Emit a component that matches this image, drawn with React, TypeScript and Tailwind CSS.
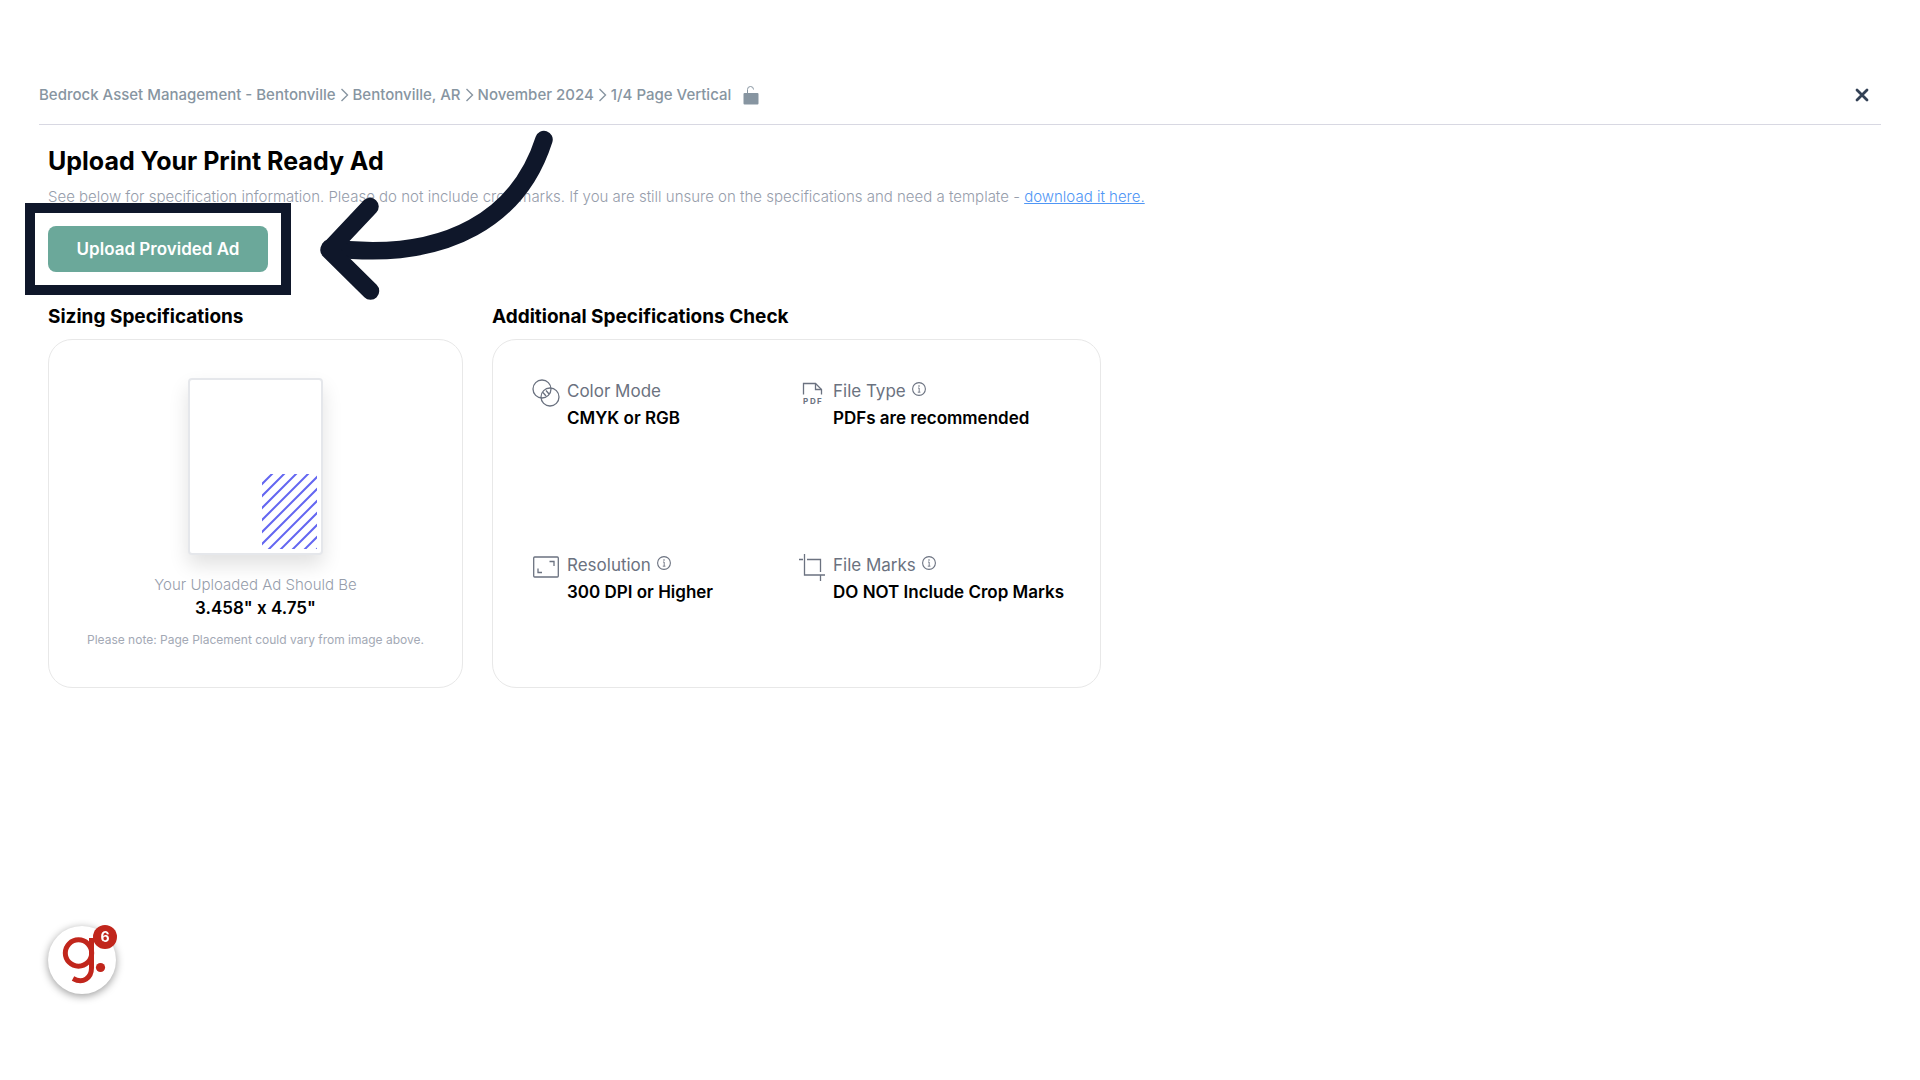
import type { ReactNode } from "react"

const crumbs = [
    "Bedrock Asset Management - Bentonville",
    "Bentonville, AR",
    "November 2024",
    "1/4 Page Vertical",
]

const ChevronIcon = () => (
    <svg viewBox="0 0 9 14" className="w-[9px] h-[14px] mx-1" fill="none" stroke="currentColor" strokeWidth="1.4">
        <path d="M1.5 1L7.5 7L1.5 13" />
    </svg>
)

const UnlockIcon = () => (
    <svg viewBox="0 0 16 20" className="w-4 h-5 ml-3" fill="none">
        <rect x="0.5" y="8" width="15" height="11.5" rx="1" fill="currentColor" />
        <path d="M4.5 8V4.5A3 3 0 0 1 10.5 4.5" stroke="currentColor" strokeWidth="1" />
    </svg>
)

const CloseIcon = () => (
    <svg viewBox="0 0 14 14" className="size-[14px]" stroke="#334155" strokeWidth="2.8" strokeLinecap="round">
        <path d="M2 2L12 12M12 2L2 12" />
    </svg>
)

const InfoIcon = () => (
    <svg viewBox="0 0 14 14" className="size-[14px]" fill="none" stroke="currentColor" strokeWidth="1.1">
        <circle cx="7" cy="7" r="6.4" />
        <path d="M6 6H7.2V10M5.8 10.2H8.4" strokeWidth="0.9" />
        <circle cx="7" cy="4" r="0.8" fill="currentColor" stroke="none" />
    </svg>
)

const ColorIcon = () => (
    <svg viewBox="0 0 28 28" className="size-7" fill="none" stroke="currentColor" strokeWidth="1.3">
        <circle cx="10" cy="10" r="9" />
        <circle cx="18" cy="18" r="9" />
        <path d="M11 13.5L14 17M14 11.5L17 15" />
    </svg>
)

const PdfIcon = () => (
    <svg viewBox="0 0 28 28" className="size-7" fill="none" stroke="currentColor" strokeWidth="1.3">
        <path d="M5.5 15.5V4.5H17.5L23.5 10.5V15.5" />
        <path d="M17.5 4.5V10.5H23.5" />
        <text x="5 12 19" y="25" fill="currentColor" stroke="none" className="text-[8px] font-bold">
            PDF
        </text>
    </svg>
)

const ResolutionIcon = () => (
    <svg viewBox="0 0 28 28" className="size-7" fill="none" stroke="currentColor" strokeWidth="1.3">
        <rect x="1.7" y="4" width="24.6" height="20" rx="1" />
        <path d="M6 15.5V19.5H10M17.5 8.5H22V13" />
    </svg>
)

const CropIcon = () => (
    <svg viewBox="0 0 28 28" className="size-7" fill="none" stroke="currentColor" strokeWidth="1.3">
        <path d="M6.5 1V22H27M1 6.5H5M9 6.5H22.5V19M22.5 22V28" />
    </svg>
)

interface SpecProps {
    icon: ReactNode
    label: string
    value: string
    info?: boolean
}

const Spec = ({ icon, label, value, info }: SpecProps) => {
    return (
        <div className="flex items-start gap-[7px] text-[#6b7280]">
            <div className="pt-px">{icon}</div>
            <div className="text-[17px] leading-[27px] whitespace-nowrap">
                <div className="flex items-center gap-1.5">
                    <span>{label}</span>
                    {info && (
                        <button type="button" aria-label={`About ${label}`} className="pb-1.5">
                            <InfoIcon />
                        </button>
                    )}
                </div>
                <p className="font-semibold text-black">{value}</p>
            </div>
        </div>
    )
}

const PagePreview = () => (
    <div className="flex items-end justify-end w-[135px] h-[177px] p-1 bg-white border-2 border-gray-200 rounded-[4px] shadow-[0_10px_20px_rgba(0,0,0,0.12)]">
        <svg viewBox="0 0 55 75" className="w-[55px] h-[75px]" stroke="#6366f1" strokeWidth="2">
            <path d="M-2 12L12 -2M-2 24L24 -2M-2 36L36 -2M-2 48L48 -2M-2 60L60 -2M-2 72L58 12M4 78L58 24M16 78L58 36M28 78L58 48M40 78L58 60M52 78L58 72" />
        </svg>
    </div>
)

const Launcher = () => (
    <button
        type="button"
        aria-label="Open chat, 6 unread"
        className="fixed left-12 bottom-[86px] size-[68px] rounded-full bg-white shadow-[0_2px_8px_rgba(0,0,0,0.4)]"
    >
        <svg viewBox="0 0 68 68" className="size-[68px]" fill="none" stroke="#c1261c" strokeWidth="5">
            <circle cx="30.5" cy="27" r="13.2" />
            <path d="M43.5 12V42C43.5 52 35 58 25 52.5" />
            <circle cx="52.5" cy="41.5" r="4.6" fill="#c1261c" stroke="none" />
        </svg>
        <span className="absolute -top-px -right-px size-6 rounded-full bg-[#c1261c] text-white text-sm leading-6 font-bold">
            6
        </span>
    </button>
)

const App = () => {
    return (
        <div className="min-h-screen bg-white font-['Inter',sans-serif] text-black px-[39px] pt-[66px]">
            <header className="flex items-center justify-between h-[59px] border-b border-[#d8d8e2] pr-3">
                <nav className="flex items-center text-[15px] leading-5 font-medium text-[#8795a1]">
                    {crumbs.map((crumb, i) => (
                        <div key={crumb} className="flex items-center">
                            {i > 0 && <ChevronIcon />}
                            <a href="#">{crumb}</a>
                        </div>
                    ))}
                    <UnlockIcon />
                </nav>
                <button type="button" aria-label="Close">
                    <CloseIcon />
                </button>
            </header>

            <main className="px-[9px] pt-5">
                <h1 className="text-[25px] leading-8 font-bold">Upload Your Print Ready Ad</h1>
                <p className="mt-2 text-[15px] leading-6 font-light text-[#969dab]">
                    See below for specification information. Please do not include crop marks. If you are still unsure on
                    the specifications and need a template -{" "}
                    <a href="#" className="text-[#4f96f5] underline">
                        download it here.
                    </a>
                </p>

                <div className="relative w-[220px] mt-[17px]">
                    <button type="button" className="w-full h-[46px] pt-0.5 rounded-lg bg-[#6ba89a] text-white text-[17px] font-semibold">
                        Upload Provided Ad
                    </button>
                    <div className="absolute -inset-[23px] border-[10px] border-[#0f172a] pointer-events-none" />
                    <svg
                        viewBox="310 125 250 180"
                        className="absolute left-[262px] -top-[101px] w-[250px] h-[180px] max-w-none pointer-events-none"
                        fill="none"
                        stroke="#0f172a"
                        strokeWidth="17.5"
                        strokeLinecap="round"
                        strokeLinejoin="round"
                    >
                        <path d="M544 139.5C520 215 450 263 330 248" />
                        <path d="M370 206.5L329 250L370.5 291" />
                    </svg>
                </div>

                <div className="flex items-stretch gap-[29px] mt-[31px]">
                    <section className="flex flex-col w-[415px]">
                        <h2 className="text-[19px] leading-7 font-bold">Sizing Specifications</h2>
                        <div className="flex flex-col items-center h-[349px] mt-2 pt-[38px] border border-[#e8e8e8] rounded-3xl">
                            <PagePreview />
                            <p className="mt-[18px] text-[15px] leading-6 font-light text-[#969dab]">Your Uploaded Ad Should Be</p>
                            <p className="text-[17px] leading-[22px] font-semibold">3.458&quot; x 4.75&quot;</p>
                            <p className="mt-[11px] text-xs leading-5 text-[#a3a9b5]">
                                Please note: Page Placement could vary from image above.
                            </p>
                        </div>
                    </section>

                    <section className="flex flex-col w-[609px]">
                        <h2 className="text-[19px] leading-7 font-bold">Additional Specifications Check</h2>
                        <div className="grid grid-cols-[266px_1fr] grid-rows-[174px_1fr] h-[349px] mt-2 pt-[38px] pl-[39px] border border-[#e8e8e8] rounded-3xl">
                            <Spec icon={<ColorIcon />} label="Color Mode" value="CMYK or RGB" />
                            <Spec icon={<PdfIcon />} label="File Type" value="PDFs are recommended" info />
                            <Spec icon={<ResolutionIcon />} label="Resolution" value="300 DPI or Higher" info />
                            <Spec icon={<CropIcon />} label="File Marks" value="DO NOT Include Crop Marks" info />
                        </div>
                    </section>
                </div>
            </main>

            <Launcher />
        </div>
    )
}

export default App
